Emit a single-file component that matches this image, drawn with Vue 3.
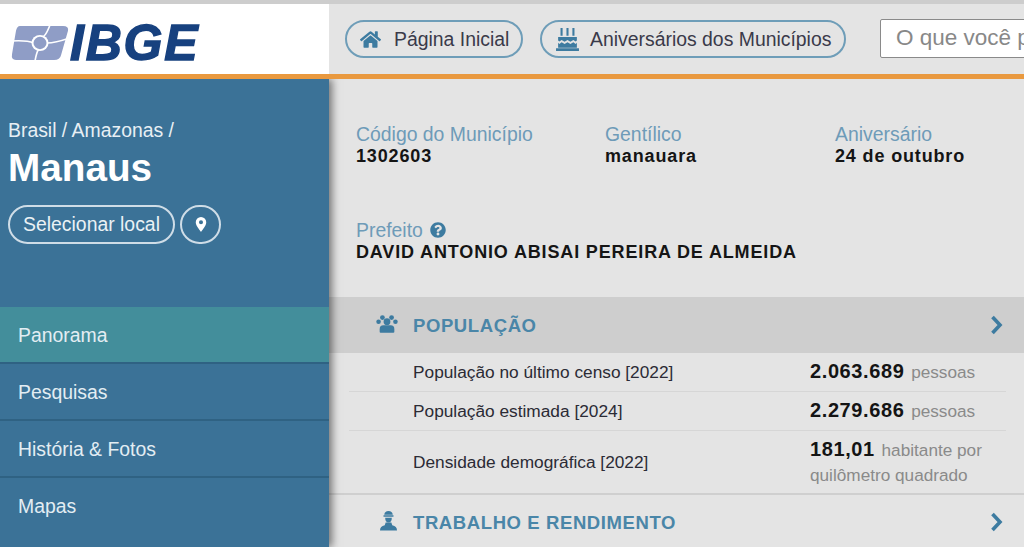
<script setup>
const fields = [
  { label: 'Código do Município', value: '1302603' },
  { label: 'Gentílico', value: 'manauara' },
  { label: 'Aniversário', value: '24 de outubro' }
]
const menu = ['Panorama', 'Pesquisas', 'História & Fotos', 'Mapas']
const rows = [
  { label: 'População no último censo [2022]', value: '2.063.689', unit: 'pessoas', cls: 'row-a' },
  { label: 'População estimada [2024]', value: '2.279.686', unit: 'pessoas', cls: 'row-b' },
  { label: 'Densidade demográfica [2022]', value: '181,01', unit: 'habitante por quilômetro quadrado', cls: 'row-c' }
]
</script>

<template>
  <div class="page">
    <div class="strip"></div>
    <header class="header">
      <div class="brand">
        <svg class="emblem" viewBox="0 0 58 38" width="58" height="36" preserveAspectRatio="none">
          <path fill="#8f9dc6" d="M9 1H52Q58 1 57 6L50 32Q49 37 43 37H5Q0 37 1 31L5 6Q6 1 9 1Z" />
          <path fill="none" stroke="#fff" stroke-width="1.600" d="M39 0C35 11 33 12 30 14M24 38C26 27 27 26 30 24M0 17C13 16 18 17 23 19M58 14C47 18 42 19 36 19" />
          <circle cx="29" cy="19" r="8.500" fill="#fff" />
          <circle cx="29" cy="19" r="6.500" fill="#8f9dc6" />
        </svg>
        <span class="logotype">IBGE</span>
      </div>
      <nav class="topnav">
        <a class="pill pill-home">
          <svg class="pill-icon" viewBox="0 0 576 512" width="21" height="19"><path fill="#3d7ba0" d="M280.37 148.26L96 300.11V464a16 16 0 0 0 16 16l112.06-.29a16 16 0 0 0 15.92-16V368a16 16 0 0 1 16-16h64a16 16 0 0 1 16 16v95.64a16 16 0 0 0 16 16.05L464 480a16 16 0 0 0 16-16V300L295.67 148.26a12.19 12.19 0 0 0-15.3 0zM571.6 251.47L488 182.56V44.05a12 12 0 0 0-12-12h-56a12 12 0 0 0-12 12v72.61L318.47 43a48 48 0 0 0-61 0L4.34 251.47a12 12 0 0 0-1.6 16.9l25.5 31A12 12 0 0 0 45.15 301l235.22-193.74a12.19 12.19 0 0 1 15.3 0L530.9 301a12 12 0 0 0 16.9-1.6l25.5-31a12 12 0 0 0-1.7-16.93z"/></svg>
          Página Inicial
        </a>
        <a class="pill pill-cake">
          <svg class="pill-icon" viewBox="0 0 24 24" width="25" height="25"><path fill="#3d7ba0" d="M5.300 1h2v7.500h-2zM11 1h2v7.500h-2zM16.700 1h2v7.500h-2zM3 9.500h18V13l-1.200 1-2.200-1.600-2.800 1.800-2.800-1.800-2.800 1.800-2.800-1.800L4.200 14 3 13zM3 15.200l1.200 1 2.200-1.600 2.800 1.800 2.800-1.800 2.800 1.800 2.800-1.800 2.200 1.600 1.200-1V20H3zM1 20.500h22V23H1z"/></svg>
          Aniversários dos Municípios
        </a>
        <input class="search" type="text" placeholder="O que você precisa saber?" />
      </nav>
    </header>
    <div class="content">
      <aside class="sidebar">
        <div class="place">
          <div class="crumbs">Brasil / Amazonas /</div>
          <h1 class="city">Manaus</h1>
          <div class="actions">
            <button class="ghost">Selecionar local</button>
            <button class="ghost round" aria-label="Localizar">
              <svg viewBox="0 0 16 20" width="12" height="15"><path fill="#fff" fill-rule="evenodd" d="M8 0a7 7 0 0 0-7 7c0 4.500 5 10 7 13 2-3 7-8.500 7-13a7 7 0 0 0-7-7zm0 4.300a2.700 2.700 0 1 1 0 5.400 2.700 2.700 0 0 1 0-5.400z"/></svg>
            </button>
          </div>
        </div>
        <ul class="menu">
          <li v-for="(m, i) in menu" :key="m" :class="{ active: i === 0 }">{{ m }}</li>
        </ul>
      </aside>
      <main class="main">
        <div class="fields">
          <div v-for="f in fields" :key="f.label" class="field">
            <div class="label">{{ f.label }}</div>
            <div class="value">{{ f.value }}</div>
          </div>
        </div>
        <div class="mayor">
          <div class="label">Prefeito
            <svg viewBox="0 0 512 512" width="16" height="16" class="help"><path fill="#3d7ba0" d="M504 256c0 136.997-111.043 248-248 248S8 392.997 8 256C8 119.083 119.043 8 256 8s248 111.083 248 248zM262.655 90c-54.497 0-89.255 22.957-116.549 63.758-3.536 5.286-2.353 12.415 2.715 16.258l34.699 26.31c5.205 3.947 12.621 3.008 16.665-2.122 17.864-22.658 30.113-35.797 57.303-35.797 20.429 0 45.698 13.148 45.698 32.958 0 14.976-12.363 22.667-32.534 33.976C247.128 238.528 216 254.941 216 296v4c0 6.627 5.373 12 12 12h56c6.627 0 12-5.373 12-12v-1.333c0-28.462 83.186-29.647 83.186-106.667 0-58.002-60.165-102-116.531-102zM256 338c-25.365 0-46 20.635-46 46 0 25.364 20.635 46 46 46s46-20.636 46-46c0-25.365-20.635-46-46-46z"/></svg>
          </div>
          <div class="value">DAVID ANTONIO ABISAI PEREIRA DE ALMEIDA</div>
        </div>
        <section class="section">
          <div class="sec-head open">
            <svg class="sec-icon users" viewBox="0 0 24 20" width="22" height="19"><g fill="#3d7ba0"><circle cx="7" cy="3.500" r="2.600"/><circle cx="17" cy="3.500" r="2.600"/><circle cx="2.800" cy="8" r="2.500"/><circle cx="21.200" cy="8" r="2.500"/><circle cx="12" cy="8" r="3.700"/><path d="M5 20q-1 0-1-1v-3q0-4 4-4h8q4 0 4 4v3q0 1-1 1z"/></g></svg>
            <span class="sec-title">POPULAÇÃO</span>
            <svg class="chev" viewBox="0 0 14 20" width="14" height="20"><path fill="none" stroke="#3d7ba0" stroke-width="3.600" d="M2.500 2l7.500 8-7.500 8"/></svg>
          </div>
          <div v-for="r in rows" :key="r.label" class="row" :class="r.cls">
            <div class="row-label">{{ r.label }}</div>
            <div class="row-val"><b>{{ r.value }}</b> <span>{{ r.unit }}</span></div>
          </div>
        </section>
        <section class="section">
          <div class="sec-head second">
            <svg class="sec-icon worker" viewBox="3 1 18 21" width="17" height="20"><g fill="#3d7ba0"><path d="M7.500 5Q8 1 12 1t4.500 4z"/><rect x="6.500" y="5.500" width="11" height="1.500" rx=".7"/><path d="M8.500 8h7q0 5-3.500 5T8.500 8z"/><path d="M9 13h6l1 3q5 1 5 5.500H3Q3 17 8 16z"/></g></svg>
            <span class="sec-title">TRABALHO E RENDIMENTO</span>
            <svg class="chev" viewBox="0 0 14 20" width="14" height="20"><path fill="none" stroke="#3d7ba0" stroke-width="3.600" d="M2.500 2l7.500 8-7.500 8"/></svg>
          </div>
        </section>
      </main>
    </div>
  </div>
</template>

<style>
html, body { margin: 0; overflow: hidden; }
</style>

<style scoped>
.page {
  height: 100vh;
  display: flex;
  flex-direction: column;
  overflow: hidden;
  background: #e4e4e4;
  font-family: "Liberation Sans", Arial, sans-serif;
  color: #222;
}
.strip { height: 4px; background: #cdcdcd; flex: none; }
.header {
  height: 70px;
  flex: none;
  display: flex;
  border-bottom: 5px solid #e9993f;
  background: #e4e4e4;
  position: relative;
  z-index: 1;
}
.brand {
  width: 329px;
  flex: none;
  background: #fff;
  display: flex;
  align-items: center;
  padding: 8px 0 0 11px;
  box-sizing: border-box;
  gap: 1px;
}
.emblem { flex: none; }
.logotype {
  font-size: 50px;
  line-height: 1;
  font-weight: 700;
  font-style: italic;
  color: #17417f;
  -webkit-text-stroke: 1.400px #17417f;
  letter-spacing: 1.800px;
}
.topnav {
  flex: 1;
  display: flex;
  align-items: center;
  padding-left: 16px;
  gap: 17px;
  min-width: 0;
}
.pill {
  height: 38px;
  box-sizing: border-box;
  border: 2px solid #6e9db8;
  border-radius: 19px;
  display: flex;
  align-items: center;
  font-size: 19.400px;
  color: #3a3a4a;
  flex: none;
  white-space: nowrap;
}
.pill-home { width: 178px; padding-left: 13px; gap: 13px; }
.pill-cake { width: 306px; padding-left: 13px; gap: 10px; }
.pill-icon { flex: none; }
.search {
  flex: none;
  width: 260px;
  height: 39px;
  margin: -2px 0 0 17px;
  box-sizing: border-box;
  border: 1px solid #8a8a8a;
  border-radius: 2px;
  background: #fff;
  padding: 0 15px;
  font-family: inherit;
  font-size: 22.500px;
  outline: none;
}
.search::placeholder { color: #888; opacity: 1; }
.content { flex: 1; display: flex; min-height: 0; }
.sidebar {
  width: 329px;
  flex: none;
  background: #3b7297;
  box-shadow: 3px 0 8px rgba(0, 0, 0, .5);
  position: relative;
  color: #fff;
  display: flex;
  flex-direction: column;
}
.place { height: 228px; flex: none; padding: 39px 0 0 8px; box-sizing: border-box; }
.crumbs { font-size: 19.400px; line-height: 24px; color: #e8eff4; }
.city { margin: 4px 0 0; font-size: 38.700px; line-height: 44px; font-weight: 700; }
.actions { display: flex; gap: 5px; margin-top: 15px; }
.ghost {
  height: 39px;
  width: 167px;
  box-sizing: border-box;
  border: 2px solid #cfdde7;
  border-radius: 20px;
  background: transparent;
  color: #eaf1f5;
  font-family: inherit;
  font-size: 19.400px;
  padding: 0;
}
.ghost.round { width: 41px; display: flex; align-items: center; justify-content: center; }
.menu { list-style: none; margin: 0; padding: 0; }
.menu li {
  height: 57px;
  box-sizing: border-box;
  border-bottom: 2px solid #2f6283;
  padding: 2px 0 0 18px;
  display: flex;
  align-items: center;
  font-size: 19.400px;
  color: #e3edf3;
}
.menu li:last-child { border-bottom: 0; padding-top: 0; }
.menu li.active { background: #438e9b; }
.main { flex: 1; min-width: 0; padding-top: 44px; }
.fields {
  display: grid;
  grid-template-columns: 249px 230px 1fr;
  padding-left: 27px;
}
.label { font-size: 19.400px; line-height: 22px; color: #6e9bb8; }
.value { font-size: 18px; line-height: 22px; font-weight: 700; color: #151515; letter-spacing: .85px; }
.mayor { padding: 52px 0 0 27px; height: 130px; box-sizing: border-box; }
.help { vertical-align: -1px; margin-left: 2px; }
.sec-head {
  display: flex;
  align-items: center;
  height: 56px;
  padding: 0 20px 0 47px;
  box-sizing: border-box;
}
.sec-head.open { background: #cecece; }
.sec-head.second { height: 53px; }
.sec-icon { flex: none; margin-top: -3px; }
.users { margin-right: 14px; }
.worker { margin: -2px 15px 0 4px; }
.sec-title { font-size: 18.500px; font-weight: 700; color: #4a86a8; letter-spacing: .6px; flex: 1; margin-top: 2px; padding-left: 1px; }
.second .sec-title { margin-top: 3px; }
.chev { flex: none; margin-top: -1px; }
.second .chev { margin-top: 0; }
.row {
  margin: 0 18px 0 20px;
  display: grid;
  grid-template-columns: 461px 1fr;
  align-items: center;
  border-bottom: 1px solid #d6d6d6;
  box-sizing: border-box;
}
.row-a, .row-b { height: 39px; }
.row-c { height: 64px; margin: 0; padding: 0 18px 0 20px; border-bottom: 2px solid #cfcfcf; }
.row-label { padding: 1px 0 0 64px; font-size: 17.300px; color: #2b2b35; }
.row-val { font-size: 17.200px; line-height: 25px; color: #8a8a8a; }
.row-val b { font-size: 20px; color: #141414; letter-spacing: .6px; margin-right: 2px; }
</style>
